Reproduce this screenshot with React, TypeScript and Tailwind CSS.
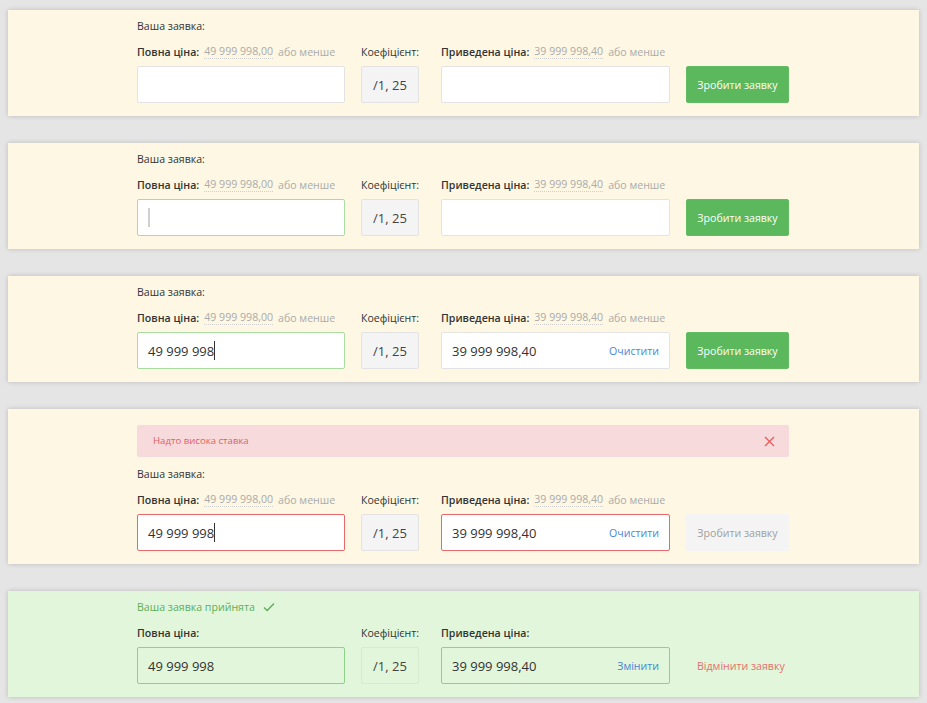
import React from "react";

type Variant = "empty" | "focus" | "filled" | "error" | "done";

const font = { fontFamily: '"Open Sans", "Noto Sans", sans-serif' };

function Hint({ value }: { value: string }) {
  return (
    <>
      <span className="ml-[5px] text-[#ababab] border-b border-dotted border-[#cfcfcf] leading-[13px] font-normal">{value}</span>
      <span className="ml-[5px] text-[#ababab] font-normal">або менше</span>
    </>
  );
}

function Panel({ v }: { v: Variant }) {
  const done = v === "done";
  const bg = done ? "bg-[#e1f6db]" : "bg-[#fdf7e3]";
  const inputBorder =
    v === "error"
      ? "border-[#e9686a]"
      : v === "focus" || v === "filled"
      ? "border-[#a8dca1]"
      : done
      ? "border-[#8fd18a]"
      : "border-[#e3e3e3]";
  const rightBorder =
    v === "error" ? "border-[#e9686a]" : done ? "border-[#8fd18a]" : "border-[#e3e3e3]";
  const inputBg = done ? "bg-transparent" : "bg-white";
  const hasValue = v === "filled" || v === "error" || done;
  return (
    <div className={`${bg} shadow-[0_0_5px_rgba(0,0,0,0.18)]`}>
      <div className="ml-[129px] w-[652px] pt-2 pb-[13px]">
        {v === "error" && (
          <div className="mt-2 mb-[9px] h-8 bg-[#f7dadb] rounded-[2px] flex items-center justify-between pl-4 pr-[14px]">
            <span className="text-[9.6px] text-[#e4605f]">Надто висока ставка</span>
            <svg width="11" height="11" viewBox="0 0 11 11" className="text-[#e4605f]">
              <path d="M1 1L10 10M10 1L1 10" stroke="currentColor" strokeWidth="1.4" />
            </svg>
          </div>
        )}
        {done ? (
          <div className="h-4 flex items-center text-[10.6px] leading-4 text-[#5fae5b]">
            Ваша заявка прийнята
            <svg width="12" height="10" viewBox="0 0 12 10" className="ml-[8px]">
              <path d="M1 5.5L4.2 8.5L11 1.5" fill="none" stroke="#5fae5b" strokeWidth="1.4" />
            </svg>
          </div>
        ) : (
          <div className="h-4 text-[10.6px] leading-4 text-[#333]">Ваша заявка:</div>
        )}
        <div className="mt-[10px] flex text-[10.6px] leading-4 text-[#333]">
          <div className="w-[208px]">
            <div className="h-4 flex items-center whitespace-nowrap">
              <span className="font-semibold">Повна ціна:</span>
              {!done && <Hint value="49 999 998,00" />}
            </div>
            <div
              className={`mt-[6px] h-[37px] border rounded-[2px] ${inputBorder} ${inputBg} flex items-center pl-[10px] text-[13px] text-[#333]`}
            >
              {v === "focus" && <span className="w-[2px] h-[19px] bg-[#d0d0d0]" />}
              {hasValue && <span>49 999 998</span>}
              {(v === "filled" || v === "error") && <span className="w-px h-[19px] bg-[#333]" />}
            </div>
          </div>
          <div className="w-[58px] ml-4">
            <div className="h-4 whitespace-nowrap">Коефіцієнт:</div>
            <div
              className={`mt-[6px] h-[37px] border rounded-[2px] ${
                done ? "border-[#d6ecd0] bg-transparent" : "border-[#e3e3e3] bg-[#f4f4f4]"
              } flex items-center justify-center text-[13px] text-[#444]`}
            >
              /1, 25
            </div>
          </div>
          <div className="w-[229px] ml-[22px]">
            <div className="h-4 flex items-center whitespace-nowrap">
              <span className="font-semibold">Приведена ціна:</span>
              {!done && <Hint value="39 999 998,40" />}
            </div>
            <div
              className={`mt-[6px] h-[37px] border rounded-[2px] ${rightBorder} ${inputBg} flex items-center justify-between pl-[10px] pr-[10px] text-[13px] text-[#333]`}
            >
              <span>{hasValue ? "39 999 998,40" : ""}</span>
              {hasValue && (
                <span className="text-[10.6px] text-[#4a86d6]">{done ? "Змінити" : "Очистити"}</span>
              )}
            </div>
          </div>
          <div className="w-[103px] ml-4 flex flex-col">
            <div className="h-4" />
            {done ? (
              <div className="mt-[6px] h-[37px] flex items-center pl-[11px] whitespace-nowrap text-[10.6px] text-[#e5706c]">
                Відмінити заявку
              </div>
            ) : (
              <div
                className={`mt-[6px] h-[37px] rounded-[2px] flex items-center justify-center text-[10.6px] ${
                  v === "error"
                    ? "bg-[#f4f4f4] text-[#a0a0a0]"
                    : "bg-[#5cb85c] text-white border border-[#62bd62]"
                }`}
              >
                Зробити заявку
              </div>
            )}
          </div>
        </div>
      </div>
    </div>
  );
}

export default function App() {
  return (
    <div style={font} className="min-h-[703px] bg-[#e5e5e5] px-2 pt-[10px] flex flex-col gap-[27px]">
      <Panel v="empty" />
      <Panel v="focus" />
      <Panel v="filled" />
      <Panel v="error" />
      <Panel v="done" />
    </div>
  );
}
